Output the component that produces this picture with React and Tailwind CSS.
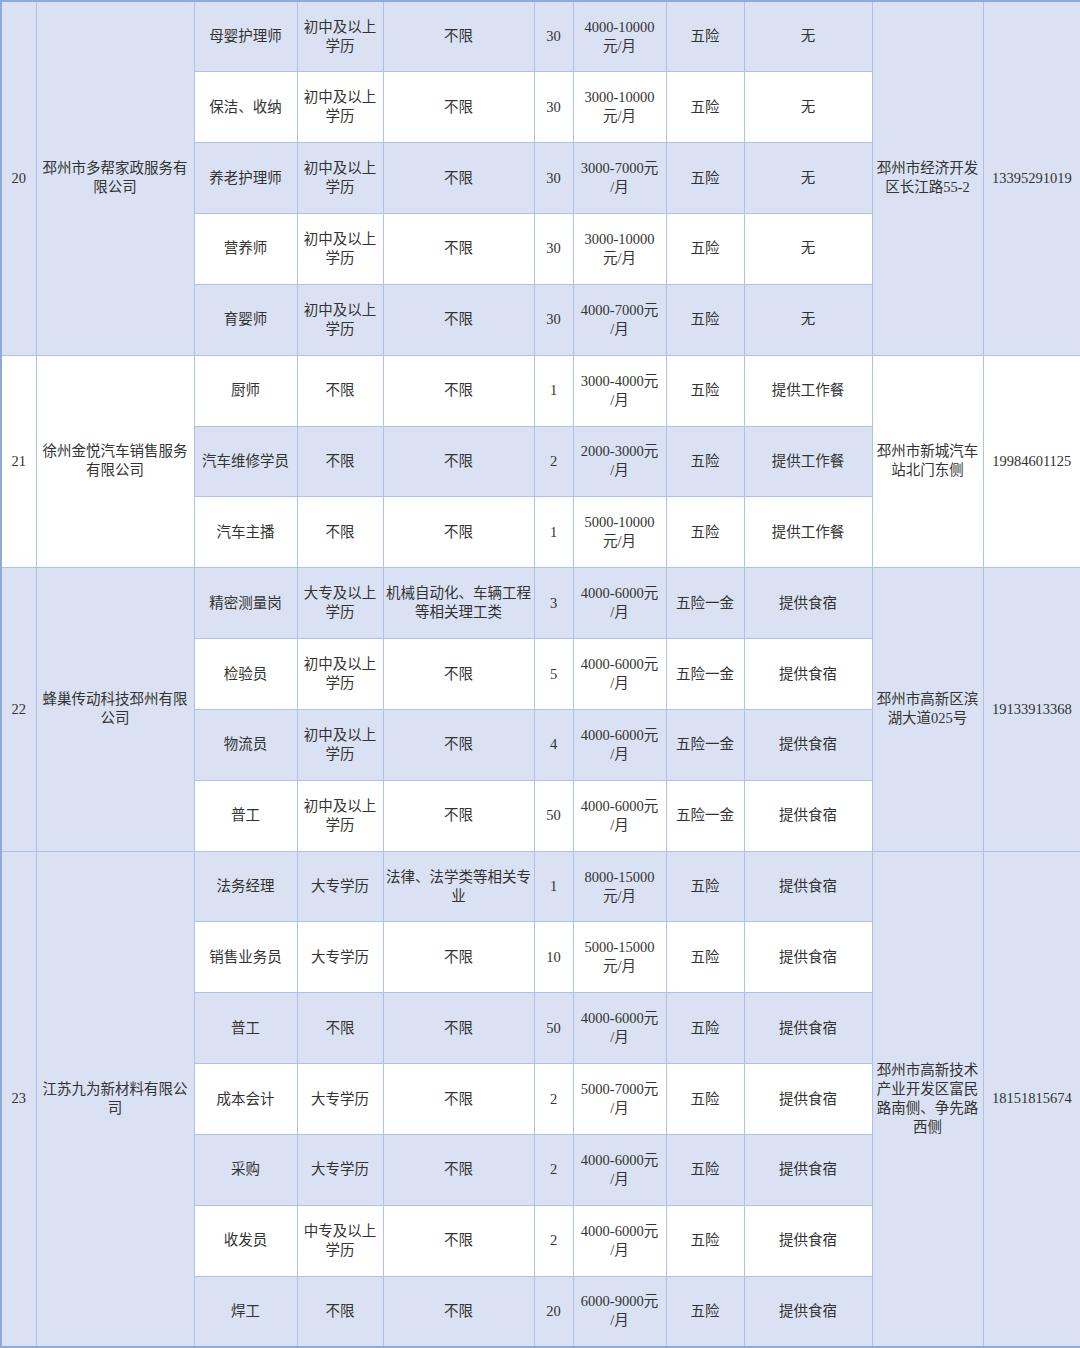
import React from 'react';

const BLUE = 'bg-[#dae1f2]';
const WHITE = 'bg-white';

const groups = [
  {
    no: '20',
    company: '邳州市多帮家政服务有限公司',
    address: '邳州市经济开发区长江路55-2',
    phone: '13395291019',
    bg: BLUE,
    jobs: [
      ['母婴护理师', '初中及以上\n学历', '不限', '30', '4000-10000\n元/月', '五险', '无'],
      ['保洁、收纳', '初中及以上\n学历', '不限', '30', '3000-10000\n元/月', '五险', '无'],
      ['养老护理师', '初中及以上\n学历', '不限', '30', '3000-7000元\n/月', '五险', '无'],
      ['营养师', '初中及以上\n学历', '不限', '30', '3000-10000\n元/月', '五险', '无'],
      ['育婴师', '初中及以上\n学历', '不限', '30', '4000-7000元\n/月', '五险', '无'],
    ],
  },
  {
    no: '21',
    company: '徐州金悦汽车销售服务有限公司',
    address: '邳州市新城汽车站北门东侧',
    phone: '19984601125',
    bg: WHITE,
    jobs: [
      ['厨师', '不限', '不限', '1', '3000-4000元\n/月', '五险', '提供工作餐'],
      ['汽车维修学员', '不限', '不限', '2', '2000-3000元\n/月', '五险', '提供工作餐'],
      ['汽车主播', '不限', '不限', '1', '5000-10000\n元/月', '五险', '提供工作餐'],
    ],
  },
  {
    no: '22',
    company: '蜂巢传动科技邳州有限公司',
    address: '邳州市高新区滨湖大道025号',
    phone: '19133913368',
    bg: BLUE,
    jobs: [
      ['精密测量岗', '大专及以上\n学历', '机械自动化、车辆工程\n等相关理工类', '3', '4000-6000元\n/月', '五险一金', '提供食宿'],
      ['检验员', '初中及以上\n学历', '不限', '5', '4000-6000元\n/月', '五险一金', '提供食宿'],
      ['物流员', '初中及以上\n学历', '不限', '4', '4000-6000元\n/月', '五险一金', '提供食宿'],
      ['普工', '初中及以上\n学历', '不限', '50', '4000-6000元\n/月', '五险一金', '提供食宿'],
    ],
  },
  {
    no: '23',
    company: '江苏九为新材料有限公司',
    address: '邳州市高新技术产业开发区富民路南侧、争先路西侧',
    phone: '18151815674',
    bg: BLUE,
    jobs: [
      ['法务经理', '大专学历', '法律、法学类等相关专\n业', '1', '8000-15000\n元/月', '五险', '提供食宿'],
      ['销售业务员', '大专学历', '不限', '10', '5000-15000\n元/月', '五险', '提供食宿'],
      ['普工', '不限', '不限', '50', '4000-6000元\n/月', '五险', '提供食宿'],
      ['成本会计', '大专学历', '不限', '2', '5000-7000元\n/月', '五险', '提供食宿'],
      ['采购', '大专学历', '不限', '2', '4000-6000元\n/月', '五险', '提供食宿'],
      ['收发员', '中专及以上\n学历', '不限', '2', '4000-6000元\n/月', '五险', '提供食宿'],
      ['焊工', '不限', '不限', '20', '6000-9000元\n/月', '五险', '提供食宿'],
    ],
  },
];

const cell = 'border border-[#aec2e8] text-center align-middle leading-[19px]';

export default function App() {
  let rowIndex = 0;
  const rows = [];
  groups.forEach((g) => {
    g.jobs.forEach((job, i) => {
      const stripe = rowIndex % 2 === 0 ? BLUE : WHITE;
      rowIndex++;
      rows.push(
        <tr key={g.no + '-' + i} className="h-[70.85px]">
          {i === 0 && (
            <>
              <td rowSpan={g.jobs.length} className={`${cell} ${g.bg} px-0`}>{g.no}</td>
              <td rowSpan={g.jobs.length} className={`${cell} ${g.bg} px-[5px]`}>{g.company}</td>
            </>
          )}
          {job.map((t, j) => (
            <td key={j} className={`${cell} ${stripe} px-0 whitespace-pre`}>{t}</td>
          ))}
          {i === 0 && (
            <>
              <td rowSpan={g.jobs.length} className={`${cell} ${g.bg} px-[4px]`}>{g.address}</td>
              <td rowSpan={g.jobs.length} className={`${cell} ${g.bg} px-0`}>{g.phone}</td>
            </>
          )}
        </tr>
      );
    });
  });

  return (
    <div className="w-[1080px] h-[1348px] overflow-hidden bg-white">
      <table
        className="w-[1080px] table-fixed border-collapse border-2 border-[#8eaadb] text-[14.5px] text-[#333]"
        style={{ fontFamily: '"Liberation Serif", "Noto Sans CJK SC", serif' }}
      >
        <colgroup>
          <col className="w-[35px]" />
          <col className="w-[158px]" />
          <col className="w-[103px]" />
          <col className="w-[86px]" />
          <col className="w-[151px]" />
          <col className="w-[39px]" />
          <col className="w-[93px]" />
          <col className="w-[78px]" />
          <col className="w-[128px]" />
          <col className="w-[111px]" />
          <col className="w-[98px]" />
        </colgroup>
        <tbody>{rows}</tbody>
      </table>
    </div>
  );
}
